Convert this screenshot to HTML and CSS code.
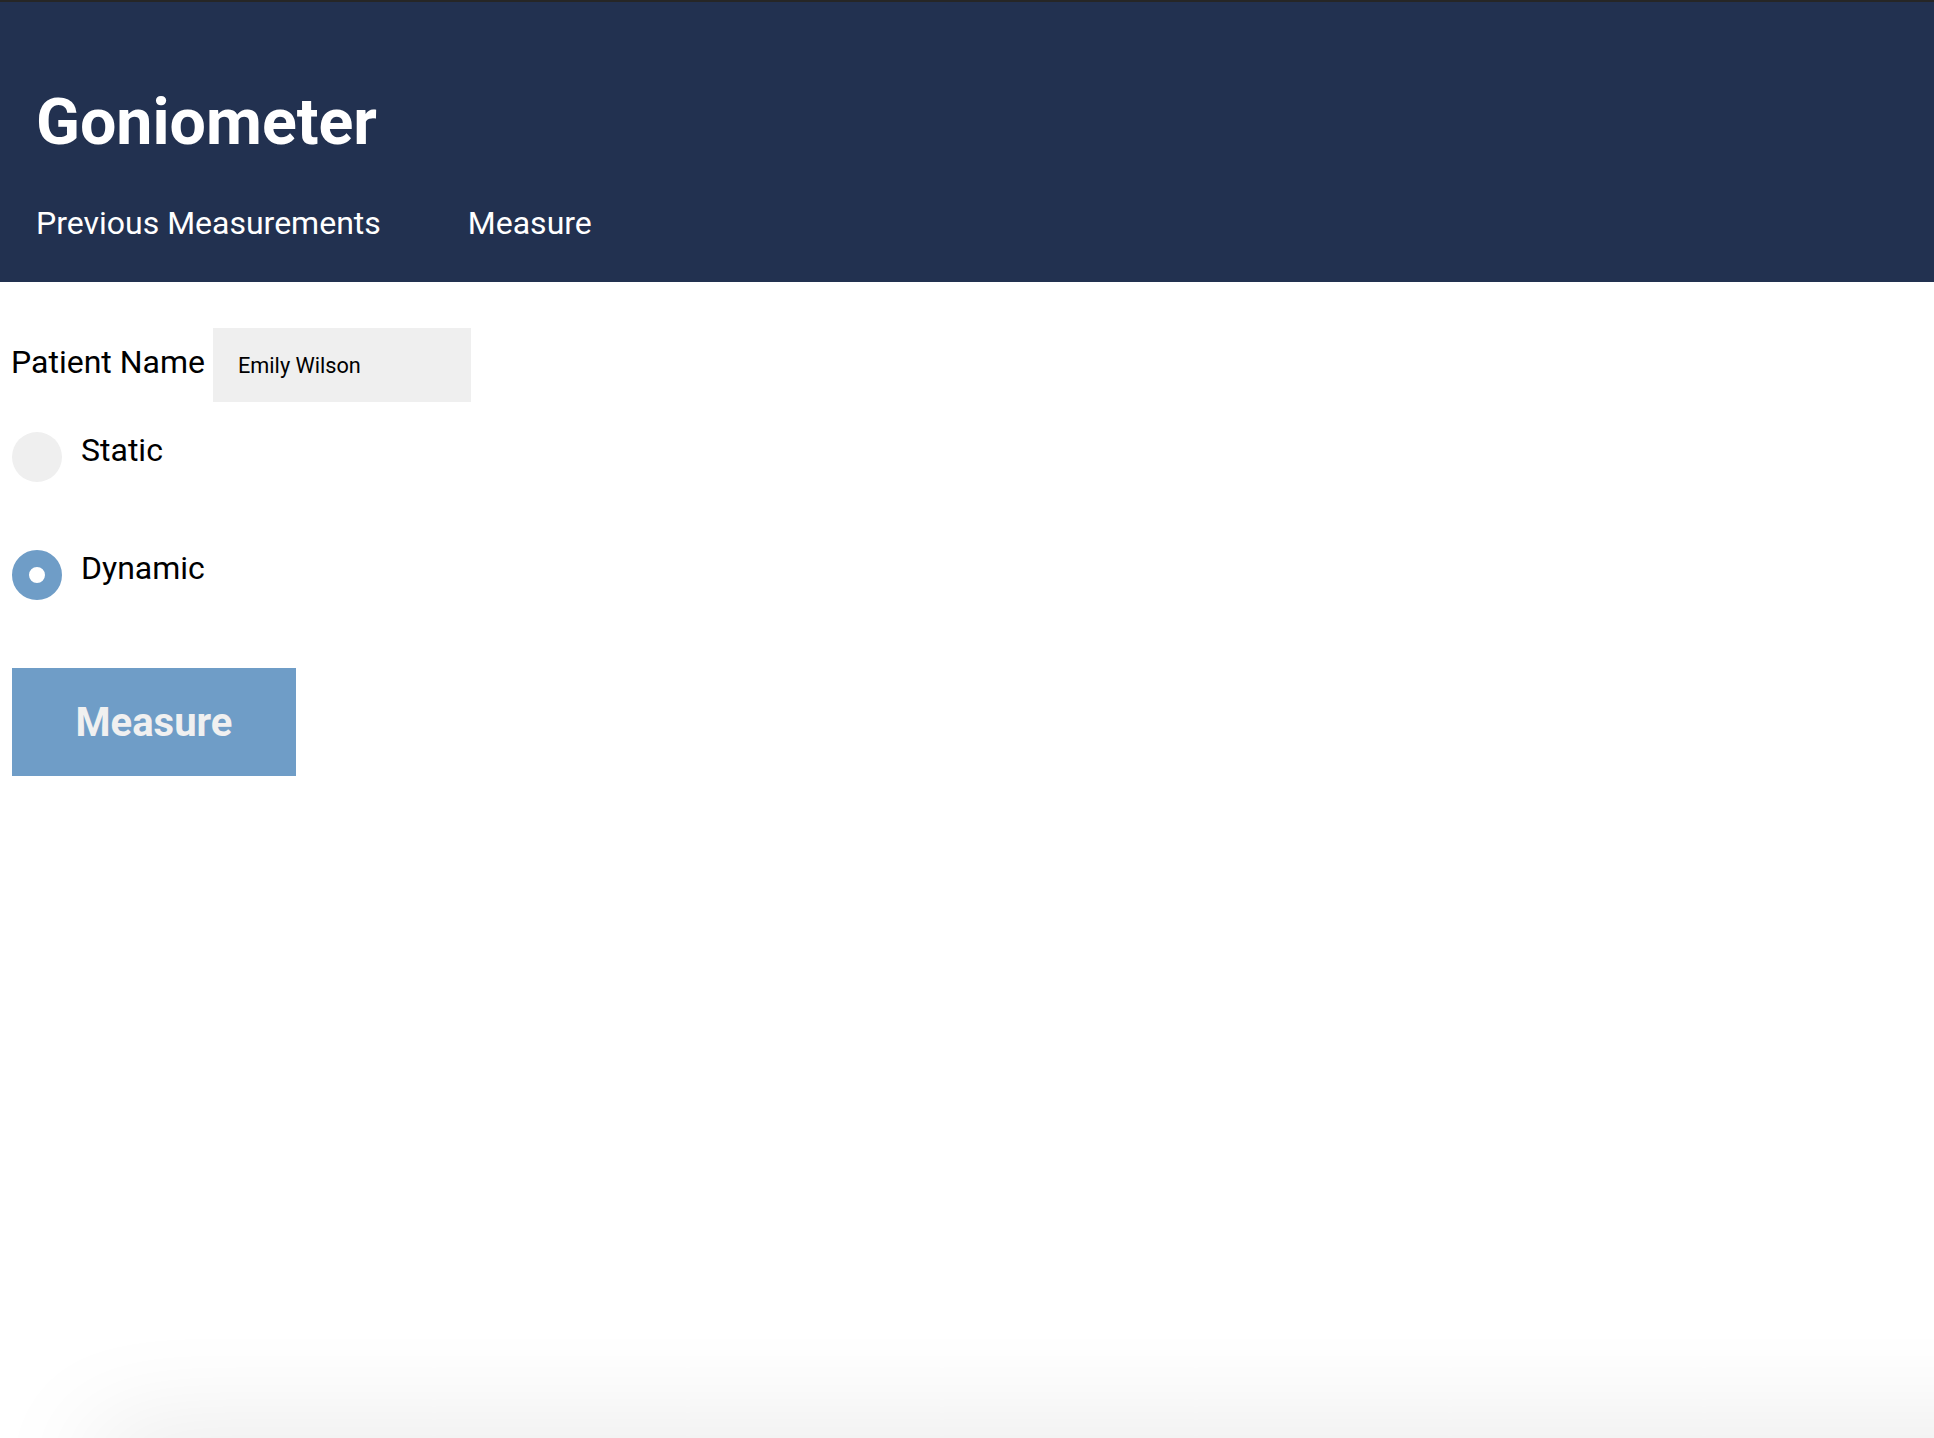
FILE: index.html
```html
<!DOCTYPE html>
<html lang="en">
<head>
<meta charset="utf-8">
<title>Goniometer</title>
<link rel="stylesheet" href="styles.css">
</head>
<body>
<header class="app-header">
  <h1 class="app-title">Goniometer</h1>
  <nav class="app-nav">
    <a class="nav-link" href="#">Previous Measurements</a>
    <a class="nav-link" href="#">Measure</a>
  </nav>
</header>
<main class="content">
  <div class="name-row">
    <label class="field-label" for="patient">Patient Name</label>
    <input class="name-input" id="patient" type="text" value="Emily Wilson">
  </div>
  <label class="radio-row">
    <input class="radio" type="radio" name="mode" value="static">
    <span class="radio-label">Static</span>
  </label>
  <label class="radio-row">
    <input class="radio" type="radio" name="mode" value="dynamic" checked>
    <span class="radio-label">Dynamic</span>
  </label>
  <button class="measure-btn" type="button">Measure</button>
</main>
<div class="window-shadow"></div>
</body>
</html>
```

FILE: styles.css
```css
html, body {
  margin: 0;
  padding: 0;
  background: #ffffff;
}

body {
  font-family: Roboto, "Liberation Sans", Arial, sans-serif;
  color: #000000;
  min-height: 100vh;
  overflow: hidden;
}

.app-header {
  background: #223150;
  border-top: 2px solid #262626;
  padding: 82px 36px 40px;
}

.app-title {
  margin: 0;
  font-size: 64.5px;
  line-height: 76px;
  font-weight: 700;
  color: #ffffff;
}

.app-nav {
  display: flex;
  gap: 87px;
  margin-top: 44px;
}

.nav-link {
  color: #ffffff;
  text-decoration: none;
  font-size: 32px;
  line-height: 38px;
  font-weight: 400;
}

.content {
  display: flex;
  flex-direction: column;
  align-items: flex-start;
  padding: 46px 12px 0;
}

.name-row {
  display: flex;
  align-items: center;
  gap: 8px;
}

.field-label {
  font-size: 32px;
  line-height: 38px;
  margin-bottom: 6px;
  margin-left: -1px;
}

.name-input {
  box-sizing: border-box;
  width: 258px;
  height: 74px;
  border: none;
  outline: none;
  background: #efefef;
  padding: 0 22px 0 25px;
  margin: 0;
  font-family: Roboto, "Liberation Sans", Arial, sans-serif;
  font-size: 21.7px;
  color: #000000;
}

.radio-row {
  display: flex;
  align-items: flex-start;
  gap: 19px;
  margin-top: 30px;
  cursor: pointer;
}

.radio-row + .radio-row {
  margin-top: 68px;
}

.radio {
  appearance: none;
  -webkit-appearance: none;
  box-sizing: border-box;
  width: 50px;
  height: 50px;
  margin: 0;
  border-radius: 50%;
  background: #efefef;
  border: none;
}

.radio:checked {
  background: #ffffff;
  border: 17.5px solid #6f9dc7;
}

.radio-label {
  font-size: 32px;
  line-height: 38px;
  margin-top: -1px;
}

.measure-btn {
  margin-top: 68px;
  width: 284px;
  height: 108px;
  border: none;
  background: #6f9dc7;
  color: #f0f0f0;
  font-family: Roboto, "Liberation Sans", Arial, sans-serif;
  font-size: 40px;
  font-weight: 700;
  padding: 0;
}

.window-shadow {
  position: fixed;
  left: 90px;
  right: -150px;
  top: 100vh;
  height: 60px;
  border-radius: 40px;
  pointer-events: none;
  box-shadow: 0 0 110px 0 rgba(0, 0, 0, 0.13);
}
```
